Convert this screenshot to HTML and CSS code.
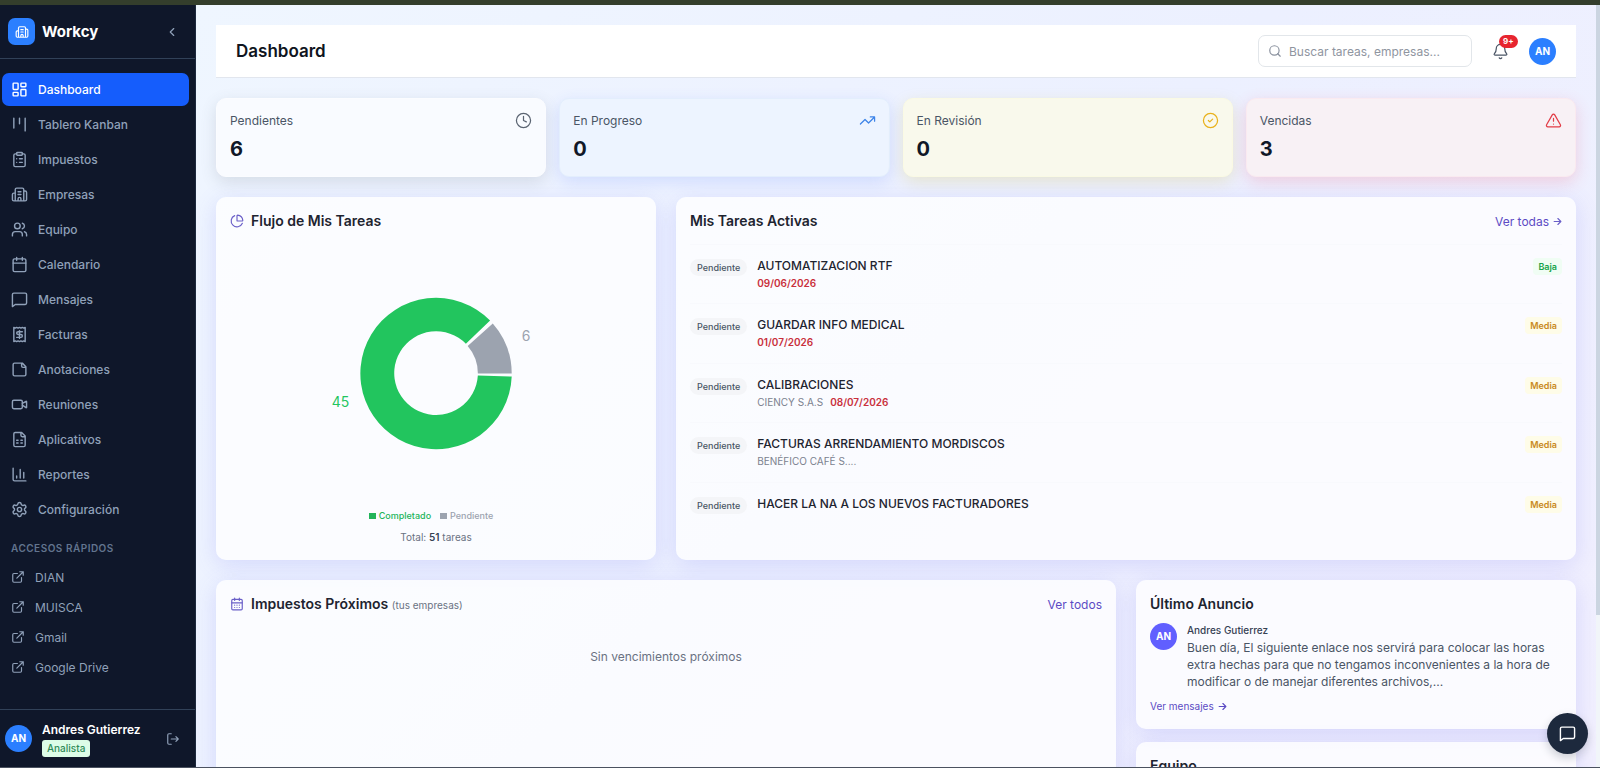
FILE: index.html
```html
<!DOCTYPE html>
<html lang="es">
<head>
    <meta charset="UTF-8">
    <meta name="viewport" content="width=device-width, initial-scale=1.0">
    <title>Workcy - Dashboard</title>
    <link rel="stylesheet" href="styles.css">
</head>
<body>
    <!-- iconos compartidos -->
    <svg class="sprite" aria-hidden="true">
        <symbol id="i-building" viewBox="0 0 24 24"><path d="M10 12h4M10 8h4M14 21v-3a2 2 0 0 0-4 0v3M6 10H4a2 2 0 0 0-2 2v7a2 2 0 0 0 2 2h16a2 2 0 0 0 2-2V9a2 2 0 0 0-2-2h-2M6 21V5a2 2 0 0 1 2-2h8a2 2 0 0 1 2 2v16"/></symbol>
        <symbol id="i-message" viewBox="0 0 24 24"><path d="M22 17a2 2 0 0 1-2 2H6l-4 3V5a2 2 0 0 1 2-2h16a2 2 0 0 1 2 2z"/></symbol>
        <symbol id="i-external" viewBox="0 0 24 24"><path d="M15 3h6v6M10 14 21 3M18 13v6a2 2 0 0 1-2 2H5a2 2 0 0 1-2-2V8a2 2 0 0 1 2-2h6"/></symbol>
        <symbol id="i-arrow" viewBox="0 0 24 24"><path d="M3 12h18M13 4l8 8-8 8"/></symbol>
    </svg>

    <div class="app">
        <aside class="sidebar">
            <div class="brand">
                <span class="brand-logo"><svg class="icon"><use href="#i-building"/></svg></span>
                <span class="brand-name">Workcy</span>
                <button class="icon-button" type="button" aria-label="Contraer menú">
                    <svg class="icon" viewBox="0 0 24 24"><path d="m15 18-6-6 6-6"/></svg>
                </button>
            </div>

            <nav class="menu">
                <a class="menu-item active" href="#">
                    <svg class="icon" viewBox="0 0 24 24"><rect x="3" y="3" width="7" height="9" rx="1"/><rect x="14" y="3" width="7" height="5" rx="1"/><rect x="14" y="12" width="7" height="9" rx="1"/><rect x="3" y="16" width="7" height="5" rx="1"/></svg>
                    Dashboard
                </a>
                <a class="menu-item" href="#">
                    <svg class="icon" viewBox="0 0 24 24"><path d="M4 3v14M12 3v8M20 3v18"/></svg>
                    Tablero Kanban
                </a>
                <a class="menu-item" href="#">
                    <svg class="icon" viewBox="0 0 24 24"><rect x="8" y="2" width="8" height="4" rx="1"/><path d="M16 4h2a2 2 0 0 1 2 2v14a2 2 0 0 1-2 2H6a2 2 0 0 1-2-2V6a2 2 0 0 1 2-2h2M12 11h4M12 16h4M8 11h.01M8 16h.01"/></svg>
                    Impuestos
                </a>
                <a class="menu-item" href="#">
                    <svg class="icon"><use href="#i-building"/></svg>
                    Empresas
                </a>
                <a class="menu-item" href="#">
                    <svg class="icon" viewBox="0 0 24 24"><path d="M16 21v-2a4 4 0 0 0-4-4H6a4 4 0 0 0-4 4v2M22 21v-2a4 4 0 0 0-3-3.87M16 3.13a4 4 0 0 1 0 7.75"/><circle cx="9" cy="7" r="4"/></svg>
                    Equipo
                </a>
                <a class="menu-item" href="#">
                    <svg class="icon" viewBox="0 0 24 24"><rect x="3" y="4" width="18" height="18" rx="2"/><path d="M8 2v4M16 2v4M3 10h18"/></svg>
                    Calendario
                </a>
                <a class="menu-item" href="#">
                    <svg class="icon"><use href="#i-message"/></svg>
                    Mensajes
                </a>
                <a class="menu-item" href="#">
                    <svg class="icon" viewBox="0 0 24 24"><path d="M4 2v20l2-1 2 1 2-1 2 1 2-1 2 1 2-1 2 1V2l-2 1-2-1-2 1-2-1-2 1-2-1-2 1ZM16 8h-6a2 2 0 1 0 0 4h4a2 2 0 1 1 0 4H8M12 17.5v-11"/></svg>
                    Facturas
                </a>
                <a class="menu-item" href="#">
                    <svg class="icon" viewBox="0 0 24 24"><path d="M16 3H5a2 2 0 0 0-2 2v14a2 2 0 0 0 2 2h14a2 2 0 0 0 2-2V8ZM15 3v4a2 2 0 0 0 2 2h4"/></svg>
                    Anotaciones
                </a>
                <a class="menu-item" href="#">
                    <svg class="icon" viewBox="0 0 24 24"><path d="m16 13 5.223 3.482a.5.5 0 0 0 .777-.416V7.87a.5.5 0 0 0-.752-.432L16 10.5"/><rect x="2" y="6" width="14" height="12" rx="2"/></svg>
                    Reuniones
                </a>
                <a class="menu-item" href="#">
                    <svg class="icon" viewBox="0 0 24 24"><path d="M15 2H6a2 2 0 0 0-2 2v16a2 2 0 0 0 2 2h12a2 2 0 0 0 2-2V7ZM14 2v4a2 2 0 0 0 2 2h4M8 13h2M14 13h2M8 17h2M14 17h2"/></svg>
                    Aplicativos
                </a>
                <a class="menu-item" href="#">
                    <svg class="icon" viewBox="0 0 24 24"><path d="M3 3v16a2 2 0 0 0 2 2h16M18 17V9M13 17V5M8 17v-3"/></svg>
                    Reportes
                </a>
                <a class="menu-item" href="#">
                    <svg class="icon" viewBox="0 0 24 24"><path d="M9.671 4.136a2.34 2.34 0 0 1 4.659 0 2.34 2.34 0 0 0 3.319 1.915 2.34 2.34 0 0 1 2.33 4.033 2.34 2.34 0 0 0 0 3.831 2.34 2.34 0 0 1-2.33 4.033 2.34 2.34 0 0 0-3.319 1.915 2.34 2.34 0 0 1-4.659 0 2.34 2.34 0 0 0-3.32-1.915 2.34 2.34 0 0 1-2.33-4.033 2.34 2.34 0 0 0 0-3.831A2.34 2.34 0 0 1 6.35 6.051a2.34 2.34 0 0 0 3.319-1.915"/><circle cx="12" cy="12" r="3"/></svg>
                    Configuración
                </a>
            </nav>

            <nav class="quick-links">
                <h2>Accesos rápidos</h2>
                <a href="#"><svg class="icon"><use href="#i-external"/></svg>DIAN</a>
                <a href="#"><svg class="icon"><use href="#i-external"/></svg>MUISCA</a>
                <a href="#"><svg class="icon"><use href="#i-external"/></svg>Gmail</a>
                <a href="#"><svg class="icon"><use href="#i-external"/></svg>Google Drive</a>
            </nav>

            <div class="user">
                <span class="avatar">AN</span>
                <div class="user-info">
                    <div class="user-name">Andres Gutierrez</div>
                    <span class="role">Analista</span>
                </div>
                <button class="icon-button" type="button" aria-label="Cerrar sesión">
                    <svg class="icon" viewBox="0 0 24 24"><path d="m17 16 4-4-4-4M21 12H9M9 21H5a2 2 0 0 1-2-2V5a2 2 0 0 1 2-2h4"/></svg>
                </button>
            </div>
        </aside>

        <main class="content">
            <header class="topbar">
                <h1>Dashboard</h1>
                <label class="search">
                    <svg class="icon" viewBox="0 0 24 24"><circle cx="11" cy="11" r="8"/><path d="m21 21-4.3-4.3"/></svg>
                    <input type="search" placeholder="Buscar tareas, empresas..." aria-label="Buscar">
                </label>
                <button class="bell" type="button" aria-label="Notificaciones">
                    <svg class="icon" viewBox="0 0 24 24"><path d="M10.268 21a2 2 0 0 0 3.464 0M3.262 15.326A1 1 0 0 0 4 17h16a1 1 0 0 0 .74-1.673C19.41 13.956 18 12.499 18 8A6 6 0 0 0 6 8c0 4.499-1.411 5.956-2.738 7.326"/></svg>
                    <span class="bell-count">9+</span>
                </button>
                <span class="avatar">AN</span>
            </header>

            <section class="stats">
                <div class="stat stat-pending">
                    <span class="stat-label">Pendientes</span>
                    <svg class="icon" viewBox="0 0 24 24"><circle cx="12" cy="12" r="10"/><path d="M12 6v6l4 2"/></svg>
                    <strong>6</strong>
                </div>
                <div class="stat stat-progress">
                    <span class="stat-label">En Progreso</span>
                    <svg class="icon" viewBox="0 0 24 24"><path d="M16 7h6v6M22 7l-8.5 8.5-5-5L2 17"/></svg>
                    <strong>0</strong>
                </div>
                <div class="stat stat-review">
                    <span class="stat-label">En Revisión</span>
                    <svg class="icon" viewBox="0 0 24 24"><circle cx="12" cy="12" r="10"/><path d="m9 12 2 2 4-4"/></svg>
                    <strong>0</strong>
                </div>
                <div class="stat stat-late">
                    <span class="stat-label">Vencidas</span>
                    <svg class="icon" viewBox="0 0 24 24"><path d="m21.73 18-8-14a2 2 0 0 0-3.48 0l-8 14A2 2 0 0 0 4 21h16a2 2 0 0 0 1.73-3M12 9v4M12 17h.01"/></svg>
                    <strong>3</strong>
                </div>
            </section>

            <section class="panels">
                <div class="card flow">
                    <div class="card-head">
                        <svg class="icon" viewBox="0 0 24 24"><path d="M21 12c.552 0 1.005-.449.95-.998a10 10 0 0 0-8.953-8.951c-.55-.055-.998.398-.998.95v8a1 1 0 0 0 1 1zM21.21 15.89A10 10 0 1 1 8 2.83"/></svg>
                        <h2>Flujo de Mis Tareas</h2>
                    </div>
                    <!-- centro 130,130; radios 76 y 42 -->
                    <svg class="donut" viewBox="0 0 260 260" role="img" aria-label="45 completadas, 6 pendientes">
                        <path class="slice-done" d="M184.3 76.8A76 76 0 1 0 206 133L172 132A42 42 0 1 1 160 100.2Z"/>
                        <path class="slice-pending" d="M206 130A76 76 0 0 0 187 79.7L161.8 102.3A42 42 0 0 1 172 130Z"/>
                        <text class="label-done" x="43" y="164" text-anchor="end">45</text>
                        <text class="label-pending" x="216" y="97">6</text>
                    </svg>
                    <div class="legend">
                        <span class="legend-done">Completado</span>
                        <span class="legend-pending">Pendiente</span>
                    </div>
                    <p class="total">Total: <strong>51</strong> tareas</p>
                </div>

                <div class="card wide tasks">
                    <div class="card-head">
                        <h2>Mis Tareas Activas</h2>
                        <a class="link" href="#">Ver todas <svg class="icon"><use href="#i-arrow"/></svg></a>
                    </div>
                    <ul class="task-list">
                        <li>
                            <span class="status">Pendiente</span>
                            <div class="task"><div class="task-title">AUTOMATIZACION RTF</div><span class="date">09/06/2026</span></div>
                            <span class="priority low">Baja</span>
                        </li>
                        <li>
                            <span class="status">Pendiente</span>
                            <div class="task"><div class="task-title">GUARDAR INFO MEDICAL</div><span class="date">01/07/2026</span></div>
                            <span class="priority">Media</span>
                        </li>
                        <li>
                            <span class="status">Pendiente</span>
                            <div class="task"><div class="task-title">CALIBRACIONES</div><span class="company">CIENCY S.A.S</span><span class="date">08/07/2026</span></div>
                            <span class="priority">Media</span>
                        </li>
                        <li>
                            <span class="status">Pendiente</span>
                            <div class="task"><div class="task-title">FACTURAS ARRENDAMIENTO MORDISCOS</div><span class="company">BENÉFICO CAFÉ S....</span></div>
                            <span class="priority">Media</span>
                        </li>
                        <li>
                            <span class="status">Pendiente</span>
                            <div class="task"><div class="task-title">HACER LA NA A LOS NUEVOS FACTURADORES</div></div>
                            <span class="priority">Media</span>
                        </li>
                    </ul>
                </div>
            </section>

            <section class="panels">
                <div class="card wide taxes">
                    <div class="card-head">
                        <svg class="icon" viewBox="0 0 24 24"><rect x="3" y="4" width="18" height="18" rx="2"/><path d="M8 2v4M16 2v4M3 10h18M8 14h.01M12 14h.01M16 14h.01M8 18h.01M12 18h.01M16 18h.01"/></svg>
                        <h2>Impuestos Próximos <small>(tus empresas)</small></h2>
                        <a class="link" href="#">Ver todos</a>
                    </div>
                    <p class="empty">Sin vencimientos próximos</p>
                </div>

                <div class="side">
                    <div class="card">
                        <div class="card-head"><h2>Último Anuncio</h2></div>
                        <div class="notice">
                            <span class="avatar avatar-indigo">AN</span>
                            <div>
                                <div class="notice-author">Andres Gutierrez</div>
                                <p>Buen día, El siguiente enlace nos servirá para colocar las horas extra hechas para que no tengamos inconvenientes a la hora de modificar o de manejar diferentes archivos,...</p>
                            </div>
                        </div>
                        <a class="link link-small" href="#">Ver mensajes <svg class="icon"><use href="#i-arrow"/></svg></a>
                    </div>
                    <div class="card team">
                        <div class="card-head"><h2>Equipo</h2></div>
                    </div>
                </div>
            </section>
        </main>
        <div class="scrollbar"><div class="scrollbar-thumb"></div></div>
    </div>

    <button class="chat" type="button" aria-label="Abrir chat"><svg class="icon"><use href="#i-message"/></svg></button>
</body>
</html>
```
FILE: styles.css
```css
* {
    box-sizing: border-box;
}
body {
    margin: 0;
    height: 100vh;
    overflow: hidden;
    border-top: 5px solid #343e2c;
    border-bottom: 1px solid #4b5260;
    font-family: Inter, "Liberation Sans", sans-serif;
    font-size: 12px;
    line-height: 17px;
    color: #1e2430;
}
h1, h2, p, ul {
    margin: 0;
    padding: 0;
}
a {
    text-decoration: none;
}
button {
    padding: 0;
    border: 0;
    background: none;
    font: inherit;
    cursor: pointer;
}
.sprite {
    display: none;
}
.icon {
    display: block;
    flex: none;
    width: 17px;
    height: 17px;
    fill: none;
    stroke: currentColor;
    stroke-width: 2;
    stroke-linecap: round;
    stroke-linejoin: round;
}
.app {
    display: flex;
    height: 100%;
}

/* menú lateral */
.sidebar {
    display: flex;
    flex-direction: column;
    flex: none;
    width: 196px;
    background: #0f172a;
    border-right: 1px solid #1d293d;
    color: #90a1b9;
}
.brand {
    display: flex;
    align-items: center;
    gap: 7px;
    height: 54px;
    padding: 0 15px 0 8px;
    border-bottom: 1px solid #314158;
}
.brand-logo {
    display: flex;
    align-items: center;
    justify-content: center;
    width: 27px;
    height: 27px;
    border-radius: 7px;
    background: #2b7fff;
    color: #fff;
}
.brand-logo .icon {
    width: 14px;
    height: 14px;
}
.brand-name {
    flex: 1;
    font-size: 15px;
    font-weight: 700;
    color: #fff;
}
.icon-button {
    padding: 1px;
    color: #90a1b9;
}
.icon-button .icon {
    width: 14px;
    height: 14px;
}
.menu {
    display: flex;
    flex-direction: column;
    gap: 2px;
    padding: 14px 6px 0 2px;
}
.menu-item {
    display: flex;
    align-items: center;
    gap: 10px;
    height: 33px;
    padding: 0 9px;
    border-radius: 7px;
    font-weight: 500;
    color: #90a1b9;
}
.menu-item.active {
    background: #155dfc;
    color: #fff;
}
.quick-links {
    flex: 1;
    padding: 14px 11px 0;
}
.quick-links h2 {
    margin-bottom: 5px;
    font-size: 10px;
    font-weight: 600;
    letter-spacing: 0.5px;
    text-transform: uppercase;
    color: #62748e;
}
.quick-links a {
    display: flex;
    align-items: center;
    gap: 10px;
    height: 30px;
    color: #90a1b9;
}
.quick-links .icon {
    width: 14px;
    height: 14px;
}
.user {
    display: flex;
    align-items: center;
    gap: 10px;
    height: 58px;
    padding: 0 14px 0 5px;
    border-top: 1px solid #314158;
}
.user-info {
    flex: 1;
}
.user-name {
    margin-bottom: 2px;
    font-weight: 600;
    color: #fff;
}
.role {
    display: block;
    width: max-content;
    padding: 0 5px;
    border-radius: 3px;
    background: #dcfce7;
    font-size: 10px;
    font-weight: 500;
    color: #2f8a57;
}
.avatar {
    display: flex;
    align-items: center;
    justify-content: center;
    flex: none;
    width: 27px;
    height: 27px;
    border-radius: 50%;
    background: #2b7fff;
    font-size: 10px;
    font-weight: 700;
    color: #fff;
}
.avatar-indigo {
    background: #615fff;
}

/* contenido */
.content {
    display: flex;
    flex-direction: column;
    flex: 1;
    gap: 20px;
    padding: 20px;
    overflow: hidden;
    background: linear-gradient(135deg, #eff6ff, #ecf0ff 50%, #f1effe);
}
.content > * {
    flex: none;
}
.topbar {
    display: flex;
    align-items: center;
    height: 53px;
    padding: 0 20px;
    background: #fff;
    border-bottom: 1px solid #e2e6ee;
}
.topbar h1 {
    flex: 1;
    font-size: 17px;
    font-weight: 600;
    line-height: 24px;
    color: #0f1420;
}
.search {
    display: flex;
    align-items: center;
    gap: 7px;
    width: 214px;
    height: 32px;
    padding: 0 9px;
    border: 1px solid #e2e6ea;
    border-radius: 7px;
    color: #8a919e;
}
.search .icon {
    width: 14px;
    height: 14px;
}
.search input {
    flex: 1;
    min-width: 0;
    padding: 0;
    border: 0;
    outline: 0;
    background: none;
    font: inherit;
}
.search input::placeholder {
    color: #8f959f;
}
.bell {
    position: relative;
    margin: 0 20px;
    color: #4a5565;
}
.bell-count {
    position: absolute;
    top: -8px;
    left: 7px;
    padding: 0 4px;
    border-radius: 7px;
    background: #e7252f;
    font-size: 8px;
    font-weight: 700;
    line-height: 13px;
    color: #fff;
}
.stats {
    display: grid;
    grid-template-columns: repeat(4, 1fr);
    gap: 13px;
}
.stat {
    display: grid;
    grid-template-columns: 1fr auto;
    align-items: center;
    gap: 7px;
    padding: 13px;
    border: 1px solid;
    border-radius: 10px;
}
.stat-label {
    color: #4a5565;
}
.stat .icon, .bell .icon {
    stroke-width: 1.75;
}
.stat strong {
    font-size: 20px;
    font-weight: 700;
    line-height: 27px;
    color: #101828;
}
.stat-pending {
    background: #f9fbff;
    border-color: #fbfcff;
    box-shadow: 0 5px 16px rgba(75, 85, 99, 0.16);
}
.stat-pending .icon {
    color: #5b6472;
}
.stat-progress {
    background: #edf4ff;
    border-color: #e3eefd;
    box-shadow: 0 5px 16px rgba(59, 100, 246, 0.16);
}
.stat-progress .icon {
    color: #3c83e8;
}
.stat-review {
    background: #f9f9ec;
    border-color: #fafae4;
    box-shadow: 0 5px 16px rgba(200, 170, 8, 0.18);
}
.stat-review .icon {
    color: #e9b21c;
}
.stat-late {
    background: #f8f1f5;
    border-color: #faeaf0;
    box-shadow: 0 5px 16px rgba(239, 68, 98, 0.2);
}
.stat-late .icon {
    color: #e23c46;
}
.panels {
    display: grid;
    grid-template-columns: repeat(3, 1fr);
    gap: 20px;
}
.wide {
    grid-column: span 2;
}
.card {
    padding: 14px;
    border-radius: 10px;
    background: rgba(255, 255, 255, 0.75);
    box-shadow: 0 5px 22px rgba(99, 102, 241, 0.18);
}
.card-head {
    display: flex;
    align-items: center;
    gap: 7px;
    height: 20px;
}
.card-head .icon {
    width: 14px;
    height: 14px;
    color: #6a5fc8;
}
.card-head h2 {
    flex: 1;
    font-size: 14px;
    font-weight: 600;
    line-height: 20px;
}
.card-head small {
    font-size: 10px;
    font-weight: 400;
    color: #6a7282;
}
.link {
    display: flex;
    align-items: center;
    gap: 4px;
    color: #5b4bc4;
}
.card .link .icon {
    width: 9px;
    height: 9px;
    stroke-width: 3;
}
.link-small {
    margin-top: 8px;
    font-size: 10px;
}

/* gráfico */
.flow {
    display: flex;
    flex-direction: column;
    align-items: center;
    height: 363px;
}
.flow .card-head {
    width: 100%;
}
.donut {
    width: 260px;
    height: 260px;
    margin: 13px 0 4px;
    font-size: 14px;
}
.slice-done, .label-done {
    fill: #22c55e;
}
.slice-pending, .label-pending {
    fill: #9ca3af;
}
.legend {
    display: flex;
    gap: 9px;
    padding-right: 10px;
    font-size: 9px;
    font-weight: 500;
}
.legend span::before {
    content: "";
    display: inline-block;
    width: 7px;
    height: 6px;
    margin-right: 3px;
    background: currentColor;
}
.legend-done {
    color: #22b45a;
}
.legend-pending {
    color: #9ca3af;
}
.total {
    margin-top: 5px;
    font-size: 10px;
    color: #6a7282;
}
.total strong {
    font-weight: 600;
    color: #364153;
}

/* tareas */
.tasks {
    display: flex;
    flex-direction: column;
}
.task-list {
    display: grid;
    flex: 1;
    grid-auto-rows: 1fr;
    margin-top: 13px;
    padding-bottom: 5px;
    list-style: none;
}
.task-list li {
    display: flex;
    align-items: flex-start;
    gap: 10px;
    padding-top: 13px;
    border-top: 1px solid #f8f9fd;
}
.task {
    flex: 1;
}
.task-title {
    line-height: 16px;
    font-weight: 500;
}
.status {
    margin-top: 1px;
    padding: 0 7px;
    border-radius: 9px;
    background: #f4f5f8;
    font-size: 9px;
    font-weight: 500;
    color: #4a5565;
}
.date {
    font-size: 10px;
    font-weight: 600;
    color: #c9303c;
}
.company {
    margin-right: 7px;
    font-size: 10px;
    color: #7a818e;
}
.priority {
    padding: 0 5px;
    border-radius: 4px;
    background: #fefce8;
    font-size: 9px;
    font-weight: 600;
    color: #c98a20;
}
.priority.low {
    background: #f0fdf4;
    color: #16a34a;
}
.taxes {
    min-height: 260px;
}
.empty {
    margin-top: 34px;
    text-align: center;
    color: #6a7282;
}
.side {
    display: grid;
    gap: 13px;
    align-content: start;
}
.notice {
    display: flex;
    gap: 10px;
    margin-top: 9px;
    color: #4a5565;
}
.notice-author {
    margin-bottom: 2px;
    font-size: 10px;
    font-weight: 500;
    line-height: 14px;
    color: #364153;
}
.team {
    min-height: 120px;
}
.scrollbar {
    flex: none;
    width: 4px;
    background: #f1f5f9;
}
.scrollbar-thumb {
    height: 80%;
    background: #cbd5e1;
}
.chat {
    position: fixed;
    right: 12px;
    bottom: 14px;
    display: flex;
    align-items: center;
    justify-content: center;
    width: 41px;
    height: 41px;
    border-radius: 50%;
    background: #1d293d;
    box-shadow: 0 4px 10px rgba(15, 23, 42, 0.2);
    color: #fff;
}
```
